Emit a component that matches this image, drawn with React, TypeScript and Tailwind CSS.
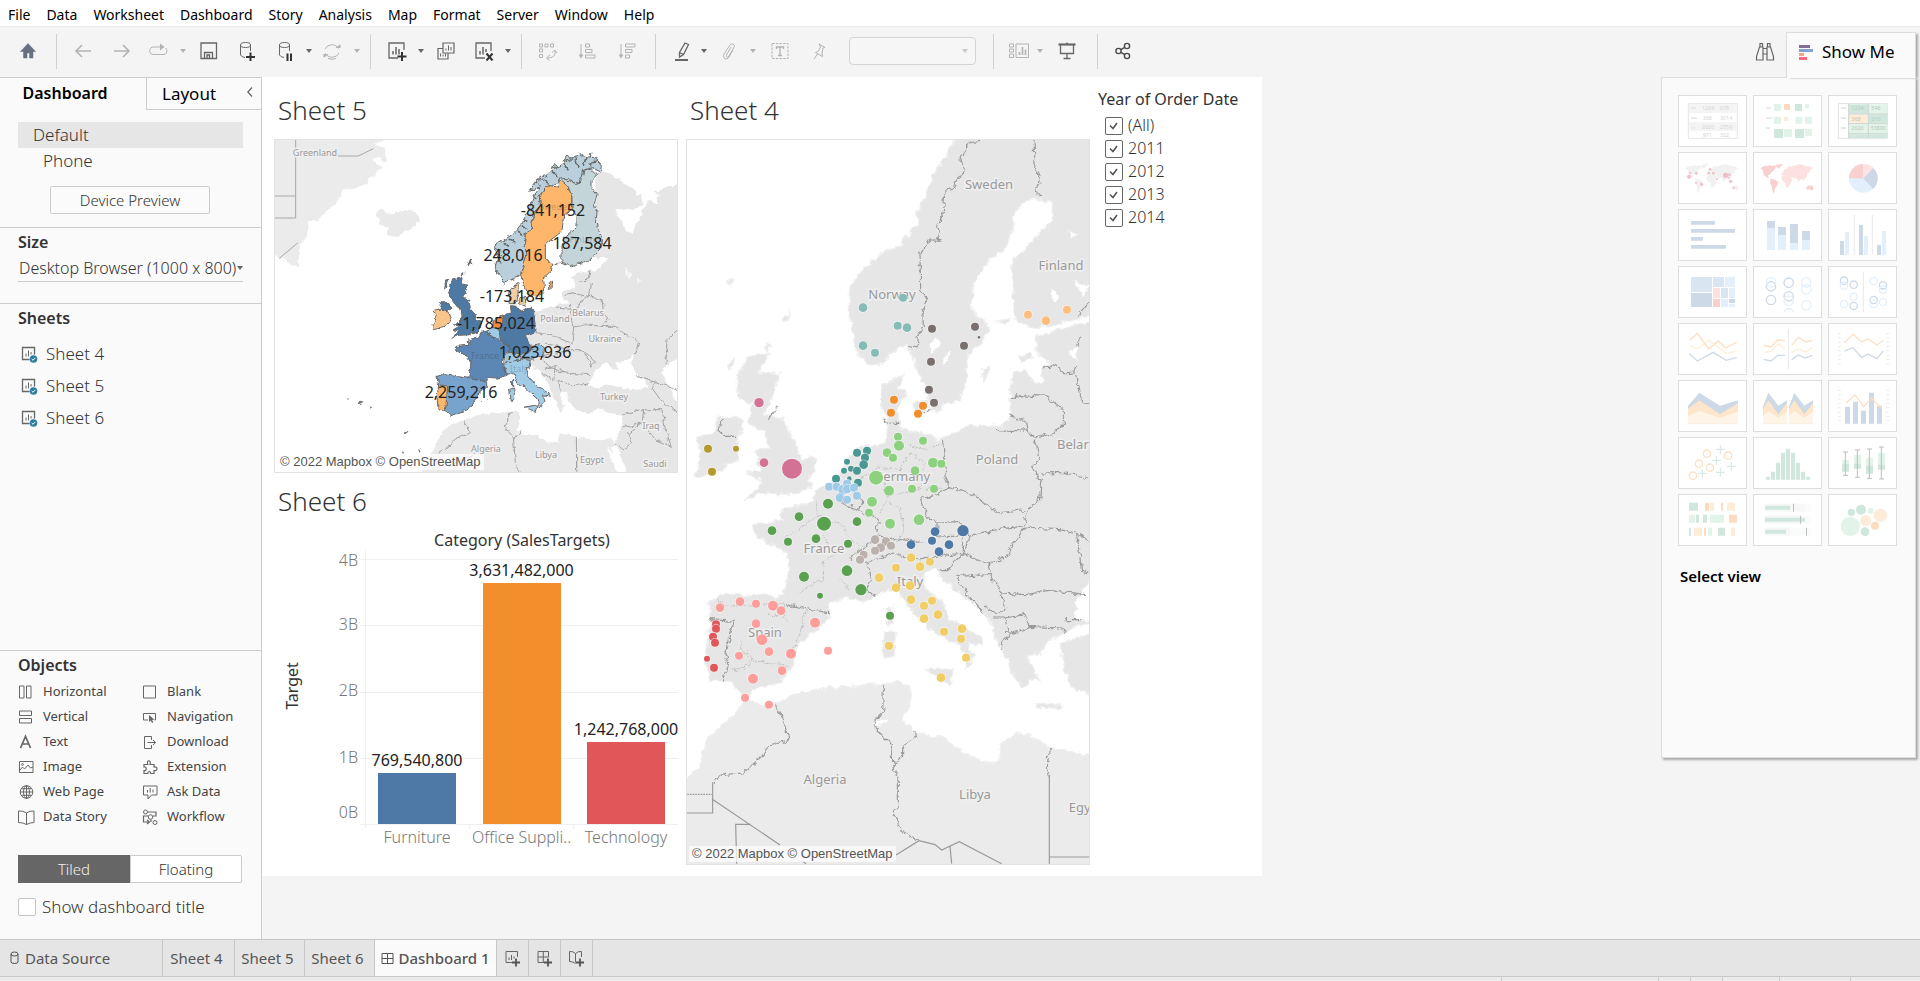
import React, { useState } from "react";

const ICON = "fill-none stroke-current";

function Svg({ w = 20, h = 20, className = "", children }: { w?: number; h?: number; className?: string; children: React.ReactNode }) {
  return (
    <svg width={w} height={h} viewBox={`0 0 ${w} ${h}`} className={`${ICON} shrink-0 ${className}`} aria-hidden="true">
      {children}
    </svg>
  );
}

function Caret({ className = "" }: { className?: string }) {
  return (
    <svg width="6" height="4" viewBox="0 0 6 4" className={`shrink-0 fill-current ${className}`} aria-hidden="true">
      <path d="M0 0h6L3 4z" />
    </svg>
  );
}

/* ---------------------------------------------------------------- menu */

const MENUS = ["File", "Data", "Worksheet", "Dashboard", "Story", "Analysis", "Map", "Format", "Server", "Window", "Help"];

function MenuBar() {
  return (
    <nav className="flex h-[26px] items-center gap-4 bg-white px-2 pt-1 text-[14px] leading-5 text-black">
      {MENUS.map((m) => (
        <button key={m} type="button">
          {m}
        </button>
      ))}
    </nav>
  );
}

/* ------------------------------------------------------------- toolbar */

function Tool({ label, className, dim, children }: { label: string; className: string; dim?: boolean; children: React.ReactNode }) {
  return (
    <button
      type="button"
      aria-label={label}
      className={`flex h-8 shrink-0 items-center justify-center ${dim ? "text-[#b3b3b3]" : "text-[#666666]"} ${className}`}
    >
      {children}
    </button>
  );
}

function Sep({ className = "" }: { className?: string }) {
  return <span className={`h-[35px] w-px shrink-0 bg-[#d0d0d0] ${className}`} />;
}

function Cylinder() {
  return (
    <>
      <ellipse cx="8.500" cy="4" rx="5" ry="2.500" />
      <path d="M3.500 4v10q1 2 4.500 2.500M13.500 4v6" />
    </>
  );
}

function Toolbar() {
  return (
    <header className="flex h-[51px] items-start border-t border-[#ececec] bg-[#f4f4f4]">
      <div className="flex h-12 items-center">
        <Tool label="Start page" className="w-14 !text-[#667080]">
          <Svg className="!fill-current">
            <path d="M10 2.500 2.500 10.500h3V17h3.500v-5h2.500v5H15v-6.500h2.500z" strokeWidth="0.500" />
          </Svg>
        </Tool>
        <Sep className="mr-1.5" />
        <Tool label="Undo" className="w-10" dim>
          <Svg>
            <path d="M18 10H3M9 4l-6 6 6 6" strokeWidth="1.600" />
          </Svg>
        </Tool>
        <Tool label="Redo" className="w-[38px]" dim>
          <Svg>
            <path d="M2 10h15M11 4l6 6-6 6" strokeWidth="1.600" />
          </Svg>
        </Tool>
        <Tool label="Replay" className="ml-0.5 w-8" dim>
          <Svg>
            <path d="M15 6H5a4 3.500 0 0 0 0 7.500h10q3-.5 3-3.500 0-2-1.500-3" />
            <path d="M11 2.500 15.500 6 11 9.500z" className="fill-current" stroke="none" />
          </Svg>
        </Tool>
        <Tool label="Replay options" className="w-4" dim><Caret /></Tool>
        <Tool label="Save" className="w-9">
          <Svg>
            <path d="M2 2h15.500v15.500H2zM5.500 17.500v-6h8v6M8 17.500V14h2.500v3.500" strokeWidth="1.300" />
          </Svg>
        </Tool>
        <Tool label="New data source" className="w-10">
          <Svg>
            <Cylinder />
            <path d="M9 16h9M13.500 11.500v9" stroke="#333" strokeWidth="2" />
          </Svg>
        </Tool>
        <Tool label="Pause auto updates" className="w-[38px]">
          <Svg>
            <Cylinder />
            <path d="M11.500 12.500V20M15 12.500V20" stroke="#333" strokeWidth="2" />
          </Svg>
        </Tool>
        <Tool label="Update options" className="w-2"><Caret /></Tool>
        <Tool label="Run update" className="w-[38px]" dim>
          <Svg>
            <path d="M3 8a7.500 7 0 0 1 13.500-.5M17 12a7.500 7 0 0 1-13.500.5M6 17.500q4 1.500 8 0" />
            <path d="M13.500 7h5V3zM6.500 13h-5v4z" className="fill-current" stroke="none" />
          </Svg>
        </Tool>
        <Tool label="Run options" className="w-3" dim><Caret /></Tool>
        <Sep className="mx-[7px]" />
        <Tool label="New worksheet" className="w-[38px]">
          <Svg>
            <path d="M17 9V2H2v15h9" strokeWidth="1.300" />
            <path d="M6 13.500V10M9 13.500V6M12 13.500V8" strokeWidth="1.500" />
            <path d="M10.500 15.500h9M15 11v9" stroke="#333" strokeWidth="2" />
          </Svg>
        </Tool>
        <Tool label="New worksheet options" className="w-2.5"><Caret /></Tool>
        <Tool label="Duplicate" className="w-10">
          <Svg>
            <path d="M7 2h11v10H7zM7 7.500H2V18h10v-6" strokeWidth="1.200" />
            <path d="M10 9.500v-2M12.500 9.500v-5M15 9.500V6M4.500 15.500v-3M7 15.500v-2M9.500 15.500v-3" />
          </Svg>
        </Tool>
        <Tool label="Clear sheet" className="w-9">
          <Svg>
            <path d="M17 10V2H2v15h9" strokeWidth="1.300" />
            <path d="M6 13.500V10M9 13.500V6M12 11V8" strokeWidth="1.500" />
            <path d="m12.500 12.500 6 7M18.500 12.500l-6 7" stroke="#333" strokeWidth="2" />
          </Svg>
        </Tool>
        <Tool label="Clear options" className="w-3"><Caret /></Tool>
        <Sep className="mx-[7px]" />
        <Tool label="Swap rows and columns" className="w-[38px]" dim>
          <Svg>
            <path d="M1.500 3h3v3h-3zM7 3h3v3H7zM12.500 3h3v3h-3zM1.500 8h3v3h-3zM1.500 13.500h3v3h-3z" />
            <path d="M17 10.500c.5 4-2 6.500-7.500 6.500M14 11.500l3-2.500 2 3M12 14l-3.500 3 3 2.500" />
          </Svg>
        </Tool>
        <Tool label="Sort ascending" className="w-10" dim>
          <Svg>
            <path d="M4 3v13M8.500 3h4v3h-4zM8.500 8.500h6.500v3H8.500zM8.500 14h9.500v3H8.500z" />
            <path d="M1.500 13.500h5L4 17.500z" className="fill-current" stroke="none" />
          </Svg>
        </Tool>
        <Tool label="Sort descending" className="w-10" dim>
          <Svg>
            <path d="M4 3v13M8.500 3H18v3H8.500zM8.500 8.500h6.500v3H8.500zM8.500 14h4v3h-4z" />
            <path d="M1.500 13.500h5L4 17.500z" className="fill-current" stroke="none" />
          </Svg>
        </Tool>
        <Sep className="mx-2" />
        <Tool label="Highlight" className="w-9">
          <Svg>
            <path d="m13 2 3.500 1.500-5 10-4 2.500v-4.500zM7.500 11.500l4 2" strokeWidth="1.300" />
            <path d="M3 19h13" strokeWidth="2" />
          </Svg>
        </Tool>
        <Tool label="Highlight options" className="w-2"><Caret /></Tool>
        <Tool label="Group members" className="w-[42px]" dim>
          <Svg>
            <path d="M12 6 7.500 14c-1 2 1.200 3 2.200 1.200L15 6.500c1.500-3-2-5-4-2.500L5 13c-2 4 2.500 7 5 3l4-7" />
          </Svg>
        </Tool>
        <Tool label="Group options" className="w-1.5" dim><Caret /></Tool>
        <Tool label="Show mark labels" className="ml-1 w-10" dim>
          <Svg>
            <path d="M2 2.500h16v15H2z" strokeDasharray="2.500 1.200" />
            <path d="M6.500 8V6h7v2M10 6v8.500M8 14.500h4" strokeWidth="1.300" />
          </Svg>
        </Tool>
        <Tool label="Fix axes" className="w-[38px]" dim>
          <Svg>
            <path d="m10 3 6 3.500-2 .5-1 5 .5 3.500-7-4 3-1.500 2-4zM8.500 13l-3.500 5" />
          </Svg>
        </Tool>
        <div className="ml-[11px] grid h-7 w-[127px] items-center">
          <select aria-label="Fit" className="col-start-1 row-start-1 h-7 w-full appearance-none rounded-sm border border-[#d4d4d4] bg-[#f6f6f6]">
            <option value="" />
          </select>
          <Caret className="pointer-events-none col-start-1 row-start-1 mr-2 justify-self-end text-[#c8c8c8]" />
        </div>
        <Sep className="mr-[7px] ml-[17px]" />
        <Tool label="Show cards" className="w-9" dim>
          <Svg>
            <path d="M.5 3h4v3h-4zM.5 8h4v3h-4zM.5 13h4v3.500h-4zM7 3h12.500v13.500H7z" />
            <path d="M10.500 14v-3M13.500 14V6M16.500 14V8.500" strokeWidth="1.600" />
          </Svg>
        </Tool>
        <Tool label="Card options" className="w-1.5" dim><Caret /></Tool>
        <Tool label="Presentation mode" className="ml-1 w-10">
          <Svg>
            <path d="M1.500 3.500h17" strokeWidth="2.200" />
            <path d="M3.500 4v8.500h13V4M10 1.500v2M10 12.500v5M6.500 17.500h7" strokeWidth="1.300" />
          </Svg>
        </Tool>
        <Sep className="mr-[7px] ml-2.5" />
        <Tool label="Share" className="w-9 !text-[#4a4a4a]">
          <Svg>
            <circle cx="5.500" cy="10" r="2.600" strokeWidth="1.400" />
            <circle cx="14" cy="5" r="2.600" strokeWidth="1.400" />
            <circle cx="14" cy="15" r="2.600" strokeWidth="1.400" />
            <path d="m7.800 8.700 4-2.400M7.800 11.300l4 2.400" strokeWidth="1.400" />
          </Svg>
        </Tool>
      </div>
      <div className="ml-auto flex items-start pr-1">
        <Tool label="Find" className="mt-2 w-[42px]">
          <Svg>
            <path d="M5 2.500h2.500V6H5zM12.500 2.500H15V6h-2.500zM4.500 6h3.500v13H1.500v-3.500zM15.500 6H12v13h6.500v-3.500zM8 7.500h4M8 13h4" strokeWidth="1.200" />
          </Svg>
        </Tool>
        <button
          type="button"
          className="relative z-10 mt-[5px] -mb-px flex h-[46px] w-[130px] items-center gap-2 border border-b-0 border-[#dcdcdc] bg-[#fafafa] pb-2 pl-3 text-[17px] leading-6 text-black shadow-[3px_1px_2px_-1px_#aaaaaa]"
        >
          <Svg w={15} h={16} className="!stroke-none">
            <path d="M0 1h11v3H0z" fill="#856f99" />
            <path d="M0 5h14v3H0z" fill="#82a3cf" />
            <path d="M0 9h5v3H0z" fill="#f2a680" />
            <path d="M0 13h8v3H0z" fill="#f76b80" />
          </Svg>
          Show Me
        </button>
      </div>
    </header>
  );
}

/* ------------------------------------------------------------- sidebar */

function SheetIcon() {
  return (
    <Svg w={17} h={17} className="text-[#666666]">
      <path d="M13.500 8.500V1.500h-12v12h7" strokeWidth="1.300" />
      <path d="M5 10.500v-3M7.500 10.500V4.500M10 8.500V6" />
      <circle cx="12.500" cy="13" r="3.800" fill="#2f7d9e" stroke="none" />
      <path d="m10.700 13 1.300 1.300 2.300-2.400" stroke="#fff" />
    </Svg>
  );
}

const OBJECTS: { name: string; icon: React.ReactNode }[] = [
  { name: "Horizontal", icon: <path d="M1.500 2h4.500v12H1.500zM8.500 2H13v12H8.500z" /> },
  { name: "Blank", icon: <path d="M1.500 2h12v12h-12z" /> },
  { name: "Vertical", icon: <path d="M1.500 2h12v4.500h-12zM1.500 9.500h12V14h-12z" /> },
  {
    name: "Navigation",
    icon: (
      <>
        <path d="M6 11H1.500V4.500h12V11h-1" />
        <path d="M7 6v7l1.800-1.500L10 14l1.300-.7-1.200-2.300 2.200-.4z" className="fill-current" stroke="none" />
      </>
    ),
  },
  { name: "Text", icon: <path d="m2.500 14 5-11.500 5 11.500M4.500 10h6" strokeWidth="1.700" /> },
  { name: "Download", icon: <path d="M9.500 6V2.500h-7v12h7V11M5.500 8.500h8M11 6l2.700 2.500L11 11" /> },
  {
    name: "Image",
    icon: (
      <>
        <path d="M1.500 2.500H15v11H1.500zM2 11l2.500-3 2 2 3.500-4 2.500 3L15 8" />
        <circle cx="4.500" cy="5.500" r=".9" />
      </>
    ),
  },
  {
    name: "Extension",
    icon: <path d="M2 8V5.500h3.800C4 .5 9.500.500 8 5.500h4V8c4-1 4 4.500 0 3.500V14.500H8.800c0-2.600-3-2.600-3 0H2V11.500c3 .8 3-4.200 0-3.500z" strokeWidth="1.200" />,
  },
  {
    name: "Web Page",
    icon: (
      <>
        <circle cx="8.500" cy="8" r="6.300" />
        <ellipse cx="8.500" cy="8" rx="3" ry="6.300" />
        <path d="M2.200 8h12.600M3.500 4.700h10M3.500 11.300h10M8.500 1.700v12.600" />
      </>
    ),
  },
  { name: "Ask Data", icon: <path d="M1.500 2H15v9H9.500L6 15v-4H1.500zM5.500 8.500V6M8.200 8.500V4M11 8.500V5.500" /> },
  { name: "Data Story", icon: <path d="M8.500 4q-3.500-2.500-8-2v11.500q4.500 0 8 2 3.500-2 7.500-2V2q-4-.5-7.500 2zM8.500 4v11.500" /> },
  {
    name: "Workflow",
    icon: (
      <>
        <circle cx="3.500" cy="3" r="2" />
        <circle cx="8.500" cy="8" r="2.300" />
        <circle cx="13" cy="13.500" r="2" />
        <path d="M5.500 3H14v4h-3M6 7H1.500v6H7M5 11l2.500 2L5 15M9 10.500V13" strokeWidth="1.200" />
      </>
    ),
  },
];

function Sidebar() {
  const [tiled, setTiled] = useState(true);
  return (
    <aside className="flex w-[262px] shrink-0 flex-col border-t border-r border-[#cccccc] bg-[#fafafa] text-[#333333]">
      <div className="flex text-[16px] leading-6 text-black">
        <button type="button" className="h-8 w-[146px] pr-4 pb-0.5 font-semibold">
          Dashboard
        </button>
        <button type="button" className="flex h-8 flex-1 items-center justify-between border-b border-l border-[#cccccc] pr-2 pl-[15px] text-[17px]">
          Layout
          <Svg w={6} h={10} className="mb-1 text-[#666666]">
            <path d="M5 .5.800 5 5 9.500" strokeWidth="1.300" />
          </Svg>
        </button>
      </div>
      <div className="px-[18px] pt-3 text-[17px] leading-[26px] font-light">
        <div className="bg-[#e6e6e6] pl-[15px]">Default</div>
        <div className="pl-[25px]">Phone</div>
        <button type="button" className="mt-3 mb-[13px] ml-8 block h-7 w-40 rounded-xs border border-[#cccccc] bg-[#fbfbfb] text-[15px] leading-6">
          Device Preview
        </button>
      </div>
      <section className="h-[76px] border-t border-[#cccccc] px-[18px] pt-0.5">
        <h2 className="text-[16px] leading-6 font-semibold">Size</h2>
        <button type="button" className="mt-0.5 flex h-[26px] w-full items-center justify-between border-b border-[#cccccc] pb-0.5 pl-px text-[16px] leading-6 font-light whitespace-nowrap">
          Desktop Browser (1000 x 800)
          <Caret className="text-[#666666]" />
        </button>
      </section>
      <section className="border-t border-[#cccccc] px-[18px] pt-0.5">
        <h2 className="text-[16px] leading-6 font-semibold">Sheets</h2>
        <ul className="mt-2 text-[17px] leading-8 font-light">
          {["Sheet 4", "Sheet 5", "Sheet 6"].map((s) => (
            <li key={s} className="flex items-center gap-2 pl-[3px]">
              <SheetIcon />
              {s}
            </li>
          ))}
        </ul>
      </section>
      <section className="mt-auto border-t border-[#cccccc] px-[18px] pt-0.5 pb-5">
        <h2 className="text-[16px] leading-6 font-semibold">Objects</h2>
        <ul className="mt-0.5 grid grid-cols-[124px_1fr] text-[13px] leading-[25px] text-[#444444]">
          {OBJECTS.map((o) => (
            <li key={o.name} className="flex items-center gap-2">
              <Svg w={17} h={16} className="text-[#666666]">{o.icon}</Svg>
              {o.name}
            </li>
          ))}
        </ul>
        <div className="mt-[26px] mr-px grid h-7 grid-cols-2 text-[15px] font-light">
          <button type="button" onClick={() => setTiled(true)} className={tiled ? "bg-[#666666] text-[#f0f0f0]" : "border border-[#cccccc] bg-white"}>
            Tiled
          </button>
          <button type="button" onClick={() => setTiled(false)} className={tiled ? "rounded-r-xs border border-[#cccccc] bg-white" : "bg-[#666666] text-[#f0f0f0]"}>
            Floating
          </button>
        </div>
        <label className="mt-3 flex items-center gap-1.5 text-[17px] leading-6 font-light">
          <input type="checkbox" className="size-[18px] appearance-none rounded-xs border border-[#c4c4c4] bg-white" />
          Show dashboard title
        </label>
      </section>
    </aside>
  );
}

/* ---------------------------------------------------------------- maps */

type Label = [number, number, string];

function MapLabels({ items, size }: { items: Label[]; size: string }) {
  return (
    <g className={`fill-[#999999] stroke-[#efefef] stroke-3 ${size}`} textAnchor="middle" paintOrder="stroke">
      {items.map(([x, y, t]) => (
        <text key={t} x={x} y={y}>
          {t}
        </text>
      ))}
    </g>
  );
}

function Coast({ id, scale }: { id: string; scale: number }) {
  return (
    <filter id={id} x="0" y="0" width="1300" height="2400" filterUnits="userSpaceOnUse">
      <feTurbulence type="fractalNoise" baseFrequency="0.050" numOctaves="4" seed="4" result="n" />
      <feDisplacementMap in="SourceGraphic" in2="n" scale={scale} xChannelSelector="R" yChannelSelector="G" />
    </filter>
  );
}

const TARGET_AREAS: [string, string][] = [
  ["#b9d0dc", "M705 585 700 560 708 530 697 500 735 475 760 458 775 440 800 390 815 350 832 325 800 332 850 288 880 265 930 235 960 228 1000 235 1018 255 1015 278 990 265 962 272 955 310 940 315 915 300 893 292 887 310 862 318 845 328 835 350 838 375 815 400 808 450 790 460 788 490 795 530 780 570 775 585 755 597 730 607Z"],
  ["#fdb66a", "M893 300 918 320 930 350 930 390 905 410 900 455 870 478 850 495 850 535 870 555 865 575 845 595 848 640 830 650 800 645 785 615 778 575 795 530 788 490 790 460 808 450 815 400 838 375 835 350 845 328 862 318 887 322Z"],
  ["#c3d5d9", "M893 292 915 300 940 315 955 310 962 272 985 265 1005 285 990 300 990 325 1005 345 997 375 1005 400 1000 430 1022 480 1010 512 980 545 935 560 900 548 900 500 905 475 945 440 945 410 930 390 930 350 918 320Z"],
  ["#4e79a3", "M572 600 600 594 598 612 617 616 612 640 598 652 620 662 627 690 640 705 640 722 656 726 656 742 648 757 625 765 592 767 568 775 592 755 574 750 600 735 578 738 600 715 598 690 584 680 572 660 560 640 566 620Z"],
  ["#4e79a3", "M535 685 540 670 560 668 570 685 558 696Z"],
  ["#fac58b", "M515 690 535 685 558 696 566 725 550 740 515 747 510 735 524 715Z"],
  ["#f58840", "M698 715 725 705 722 730 712 750 690 742Z"],
  ["#a0cbe6", "M670 755 690 745 712 752 716 784 700 775Z"],
  ["#4e79a3", "M745 678 765 680 775 695 805 685 815 700 822 755 790 768 808 800 800 820 740 822 737 797 716 784 712 752 722 730 725 705 748 700Z"],
  ["#f0cfa5", "M740 632 768 612 768 640 760 672 745 672Z"],
  ["#e9c796", "M770 655 790 650 792 680 772 672Z"],
  ["#5b87b5", "M658 757 670 755 700 775 740 796 738 815 720 840 725 865 732 888 705 895 680 893 668 908 620 898 627 850 615 830 585 812 582 800 620 797 620 780 650 772Z"],
  ["#a3c8dc", "M722 842 740 818 770 822 775 838 745 850Z"],
  ["#8dbde0", "M770 825 800 820 810 800 835 795 848 805 845 825 815 838 775 837Z"],
  ["#a0cbe6", "M725 850 745 848 775 838 805 842 801 862 790 868 800 890 825 920 862 940 862 950 845 945 848 965 835 985 828 960 790 925 765 905 755 880 730 885Z"],
  ["#a0cbe6", "M790 982 830 975 822 998 795 990ZM740 930 755 925 758 955 745 965Z"],
  ["#5b87b5", "M745 910 755 898 755 922Z"],
  ["#78a3cc", "M525 890 545 885 615 895 677 908 677 920 645 945 635 970 615 995 580 1003 567 1008 550 990 556 920 530 918Z"],
  ["#fdb66a", "M530 915 557 920 550 995 528 990 525 950Z"],
];

function SalesMap() {
  return (
    <svg viewBox="0 0 404 334" className="block w-full bg-white" role="img" aria-label="Sheet 5 map">
      <defs>
        <Coast id="coast-a" scale={16} />
      </defs>
      <g transform="scale(.33333) translate(-36 -178)">
        <g filter="url(#coast-a)">
          <path className="fill-[#ebebeb]" d="M20 150 370 160 362 188 335 195 372 205 372 248 345 232 330 240 362 264 340 285 320 298 300 320 240 330 237 352 215 380 195 395 165 422 142 425 138 450 130 470 115 490 108 560 90 555 60 535 20 515Z" />
          <path className="fill-[#e9e9e9]" d="M345 405 355 388 378 402 400 400 430 388 465 400 472 420 460 440 405 470 372 462 380 445 352 435Z" />
          <path
            className="fill-[#e6e6e6]"
            d="M1010 270 1045 282 1100 318 1138 352 1142 378 1110 392 1070 388 1058 405 1080 425 1095 455 1112 462 1120 435 1135 425 1140 395 1160 362 1185 370 1190 345 1175 335 1215 320 1260 315 1260 1190 1100 1190 1060 1090 1075 1050 1082 1005 1040 1000 1010 985 980 1003 940 990 918 965 915 935 900 935 892 945 905 975 895 1000 870 940 862 915 835 880 805 850 780 830 780 700 820 695 870 680 930 672 905 665 897 645 905 630 940 622 935 600 920 590 985 570 990 545 1010 510 1000 400 1000 300Z"
          />
          <path className="fill-[#e9e9e9]" d="M605 1020 640 1008 700 1000 745 995 775 997 772 1035 762 1050 785 1065 830 1070 850 1085 890 1088 892 1065 915 1060 945 1072 1000 1082 1030 1080 1045 1072 1062 1092 1050 1105 1075 1190 470 1190 520 1100 550 1045Z" />
          <path className="fill-white" d="M985 902 1000 870 1032 848 1050 865 1072 872 1062 852 1092 845 1118 822 1108 850 1115 875 1150 900 1160 925 1100 928 1040 915 1000 928 980 918ZM1260 830 1225 850 1203 862 1200 880 1225 930 1240 965 1260 965ZM920 575 985 560 990 535 1040 535 1000 575ZM1036 1098 1060 1130 1085 1190 1070 1190 1045 1135Z" />
          <path className="fill-[#f4f4f4]" d="M1085 560 1110 590 1100 600ZM1125 590 1140 605 1130 610Z" />
          <g className="fill-none stroke-[#a3a3a3]" strokeWidth="3">
            <path d="M985 570 975 605 950 608M985 610 980 650 930 640 905 645M980 650 950 670 940 690 880 685M925 672 935 740 930 790 915 785 870 768 820 758M980 650 1020 660 1025 700 1040 715 1020 740 970 735 935 742M1020 740 1060 740 1085 760 1130 785 1120 825M930 790 915 810 880 795 850 790M915 810 965 810 1000 850 990 860 965 812M840 830 880 825 915 812M850 870 880 855 905 880 985 885M880 855 875 905 840 880M885 905 930 915 985 910M885 905 895 935M845 840 860 860 905 880M1125 888 1180 905 1247 930M1180 905 1170 925 1195 960 1247 1000M1082 1005 1140 990 1200 990 1210 1050 1228 1100M1140 1030 1145 990M1082 1045 1140 1030 1100 1060 1110 1090 1080 1110 1062 1092M1140 1030 1180 1080 1228 1100M1212 850 1215 780 1247 750" />
            <path d="M605 1022 625 1060 580 1078 560 1100 530 1118M745 997 730 1040 755 1080 760 1150 775 1178M755 1080 778 1052M943 1072 944 1178M944 1178V1120M640 1120 560 1160" />
          </g>
          <path className="fill-[#777777]" d="M255 953l6 4-3 3zM285 965l12-2 10 5-14 6zM320 978l10 4-2 6zM425 1055l12-2 2 4-8 4zM418 1112l8 2-2 6zM465 1112l12-6-4 12z" />
          <g className="stroke-[#666666]" strokeWidth="3">
            {TARGET_AREAS.map(([fill, d], i) => (
              <path key={i} d={d} fill={fill} />
            ))}
            <path className="fill-[#b9d0dc]" d="M835 320l-35 15 20-25zM855 290l-30 12 22-20zM885 262l-22 4 20-12zM925 240l-22 6 15-20zM960 230l-8-8M985 232l2-10M700 505l18 10M700 525l22 6M705 545l14 2M712 590l-8-22" />
            <path className="fill-none" d="M740 478l20 10M725 488l16 12M765 458l18 10M780 438l12 10M785 420l12 6M810 350l16 8M840 300l20 14M870 275l16 16M905 250l14 22M940 236l8 26M975 232l-8 24M1000 240l-14 18" strokeWidth="5" />
            <path className="fill-[#4e79a3]" d="M625 540l-8 18 10-4zM605 575l-8 14 8-2zM552 600l-5 30 14-30z" />
            <path className="fill-[#e9a55b]" d="M862 612l10-6-2 20-8 4z" />
            <path className="fill-none" d="M875 555l14-2M890 548l22 8M655 965l4 4M672 955l6 4" />
          </g>
        </g>
        <g className="fill-none stroke-[#a8a8a8]" strokeWidth="3">
          <path d="M101 178V415H36M36 349h65M219 229h70l45-22M108 489 52 536" />
        </g>
      </g>
      <MapLabels
        size="text-[9px]"
        items={[
          [41, 17, "Greenland"], [281, 183, "Poland"], [314, 177, "Belarus"], [331, 203, "Ukraine"], [340, 261, "Turkey"],
          [377, 290, "Iraq"], [212, 313, "Algeria"], [272, 319, "Libya"], [318, 324, "Egypt"], [381, 328, "Saudi"],
        ]}
      />
      <g className="fill-black/20 text-[9px]" textAnchor="middle">
        <text x="211" y="220">France</text>
        <text x="245" y="233">Italy</text>
        <text x="282" y="71">Sweden</text>
        <text x="311" y="104">Finland</text>
      </g>
      <g className="fill-[#222222] text-[16px]" textAnchor="middle">
        <text x="279" y="77">-841,152</text>
        <text x="308" y="110">187,584</text>
        <text x="239" y="122">248,016</text>
        <text x="238" y="163">-173,184</text>
        <text x="222" y="190">-1,785,024</text>
        <text x="261" y="219">1,023,936</text>
        <text x="187" y="259">2,259,216</text>
      </g>
    </svg>
  );
}

/* x, y, radius */
const CITY_GROUPS: { fill: string; points: [number, number, number][] }[] = [
  { fill: "#86bcb6", points: [[669, 654, 12], [549, 684, 13], [653, 738, 12], [681, 744, 13], [549, 798, 13], [585, 819, 12]] },
  { fill: "#79706e", points: [[756, 747, 12], [885, 741, 12], [852, 798, 12], [753, 846, 12], [747, 930, 12], [762, 969, 12], [897, 773, 4]] },
  { fill: "#ffbe7d", points: [[1044, 705, 12], [1098, 723, 13], [1161, 690, 12]] },
  { fill: "#f28e2b", points: [[642, 960, 12], [633, 999, 12], [729, 978, 12], [714, 1002, 12]] },
  { fill: "#d37295", points: [[237, 969, 14], [252, 1149, 13], [336, 1167, 30]] },
  { fill: "#b6992d", points: [[84, 1107, 12], [168, 1107, 9], [96, 1176, 12]] },
  {
    fill: "#499894",
    points: [[531, 1119, 12], [561, 1113, 12], [555, 1134, 12], [551, 1155, 13], [501, 1146, 9], [513, 1167, 9], [492, 1173, 9], [531, 1173, 12], [468, 1197, 12], [508, 1197, 7], [534, 1209, 12]],
  },
  {
    fill: "#8cd17d",
    points: [[654, 1071, 12], [657, 1098, 15], [729, 1083, 12], [621, 1119, 13], [639, 1134, 12], [759, 1149, 15], [784, 1152, 12], [705, 1173, 13], [588, 1194, 21], [627, 1233, 15], [696, 1227, 12], [762, 1227, 12], [576, 1266, 15], [567, 1299, 12], [630, 1332, 15], [717, 1320, 16]],
  },
  { fill: "#a0cbe8", points: [[447, 1221, 12], [470, 1221, 12], [490, 1230, 15], [501, 1212, 12], [502, 1228, 13], [522, 1224, 12], [531, 1248, 12], [480, 1254, 13], [501, 1260, 12]] },
  {
    fill: "#59a14f",
    points: [[444, 1272, 15], [357, 1311, 13], [432, 1332, 21], [531, 1326, 13], [276, 1353, 13], [324, 1386, 12], [408, 1377, 13], [504, 1392, 12], [501, 1473, 16], [372, 1491, 15], [543, 1530, 17], [420, 1548, 9], [630, 1608, 12]],
  },
  { fill: "#bab0ac", points: [[585, 1380, 13], [618, 1386, 13], [633, 1398, 12], [602, 1404, 13], [585, 1413, 12], [551, 1425, 12], [540, 1440, 12]] },
  { fill: "#4e79a7", points: [[765, 1356, 13], [849, 1353, 17], [756, 1383, 12], [693, 1395, 13], [807, 1395, 13], [777, 1416, 13]] },
  {
    fill: "#f1ce63",
    points: [[693, 1434, 13], [648, 1464, 12], [720, 1461, 13], [750, 1446, 12], [597, 1494, 13], [690, 1518, 13], [648, 1524, 13], [693, 1560, 13], [756, 1563, 12], [732, 1578, 12], [774, 1605, 13], [732, 1617, 13], [792, 1656, 12], [846, 1647, 13], [843, 1677, 12], [858, 1734, 12], [783, 1794, 13], [627, 1698, 12]],
  },
  {
    fill: "#ff9d9a",
    points: [[120, 1584, 13], [180, 1566, 13], [228, 1572, 12], [279, 1578, 15], [303, 1593, 13], [228, 1632, 13], [405, 1629, 15], [246, 1680, 16], [267, 1716, 13], [333, 1722, 15], [444, 1713, 12], [177, 1728, 12], [306, 1773, 13], [219, 1797, 15], [195, 1854, 12], [267, 1875, 12]],
  },
  { fill: "#e15759", points: [[108, 1634, 12], [108, 1647, 12], [99, 1671, 12], [105, 1689, 12], [81, 1737, 9], [102, 1764, 12]] },
];

function CityMap() {
  return (
    <svg viewBox="0 0 404 726" className="block w-full bg-white" role="img" aria-label="Sheet 4 map">
      <defs>
        <Coast id="coast-b" scale={22} />
      </defs>
      <g transform="scale(.33333) translate(-18 -178)">
        <g filter="url(#coast-b)">
          <g className="fill-[#e6e6e6] stroke-[#f0f0f0]" strokeWidth="4">
            <path d="M830 150 800 230 760 285 735 350 710 400 715 430 685 462 660 500 600 520 540 580 510 620 505 680 515 740 525 800 545 840 590 858 620 840 650 805 680 795 695 820 710 870 735 920 748 990 775 1000 795 970 840 965 860 900 865 825 900 795 930 750 900 712 875 690 880 620 920 550 980 500 1000 455 998 410 1030 370 1060 355 1115 370 1118 420 1060 480 1015 530 995 540 998 620 1005 720 1060 745 1110 740 1245 705V150Z" />
            <path d="M1245 725 1190 735 1070 770 1065 810 1110 850 1085 868 1090 900 1070 915 1035 870 1000 880 990 930 990 1000 985 1020 960 1040 870 1035 780 1080 720 1060 690 1055 660 1040 652 990 680 935 655 925 670 882 605 920 605 990 625 1020 620 1070 610 1095 540 1100 500 1145 470 1200 405 1232 400 1270 300 1288 310 1320 215 1335 230 1370 320 1420 330 1450 312 1550 200 1545 125 1545 85 1570 90 1620 75 1740 90 1805 150 1805 195 1850 225 1825 290 1815 340 1760 350 1700 445 1620 450 1570 500 1553 550 1570 600 1540 650 1530 690 1590 740 1640 800 1680 845 1700 862 1770 882 1730 860 1690 912 1695 905 1670 860 1650 810 1620 790 1570 730 1520 735 1475 770 1465 790 1500 910 1600 940 1640 945 1680 985 1740 1000 1790 1030 1830 1050 1800 1080 1800 1040 1730 1080 1720 1110 1680 1140 1670 1190 1640 1245 1620Z" />
            <path d="M205 830 270 820 235 880 300 880 275 965 250 1005 310 1020 340 1080 365 1140 405 1132 405 1170 380 1210 400 1215 350 1245 240 1240 190 1265 250 1205 200 1180 240 1170 225 1110 270 1110 255 1060 205 1030 215 975 180 960 170 890Z" />
            <path d="M110 1010 180 1010 190 1050 170 1070 175 1140 90 1187 45 1190 62 1130 50 1070 100 1065Z" />
            <path d="M700 970 740 962 735 1000 705 1008ZM905 870 930 862 910 910ZM620 1590 638 1580 640 1625 625 1640ZM610 1655 645 1655 645 1730 612 1735ZM735 1770 820 1768 810 1820ZM1065 1870 1145 1878 1140 1886 1070 1884ZM1140 1690 1245 1660V1850L1170 1820 1150 1760ZM135 605l25-8-5 22zM310 715l18-20-6 36zM145 850l20-14-15 35zM1018 830l35-10 5 14-35 14zM945 725l45-8-15 20zM255 795l14 4-8 18z" />
          </g>
          <path className="fill-[#ebebeb] stroke-[#f0f0f0]" strokeWidth="4" d="M0 2110 60 2060 80 1980 160 1910 195 1857 270 1885 330 1850 420 1825 600 1815 655 1805 690 1820 690 1880 665 1920 710 1960 800 1975 830 2010 930 2055 960 2040 965 1990 1015 1960 1060 1970 1110 2005 1245 2030V2380H0Z" />
          <path className="fill-white" d="M1245 1480 1190 1560 1185 1620 1245 1625ZM745 790l30-15 5 25-25 20zM790 840l20-25-5 20-15 30zM1165 455l30 10-25 8zM1115 630l18 12-6 28-10-12zM1180 600l50 20-20 30zM1165 810l30-10-5 45zM590 1930l30-10 5 10-30 10z" />
          <g className="fill-none stroke-[#999999]" strokeWidth="3.500">
            <path d="M900 185 865 190 840 240 850 270 820 325 795 330 790 400 770 445 780 482 745 480 720 520 722 630 742 660 728 690 730 740 712 770 708 805 685 800M1062 180 1065 250 1080 290 1070 330 1082 355M1195 708 1228 668M1200 770 1190 800M1088 865 1120 855 1155 882 1185 880 1190 862M1190 885 1205 965 1228 970M990 960 1020 945 1100 950 1150 990 1150 1035 1125 1060 1065 1075M985 1005 1040 1025 1045 1055 945 1050M1045 1055 1065 1075 1078 1140 1055 1160 1085 1210 1078 1260 1045 1290 1030 1340M1085 1180 1150 1178 1228 1195M135 1018 112 1050 135 1070 165 1070M295 980 265 1020M608 1018 630 1030 655 1032" />
            <path d="M785 1080 790 1130 800 1200 810 1225 870 1240 910 1265 950 1300 1035 1290M810 1225 722 1260 740 1310 775 1330 770 1370 850 1365 850 1420 765 1430 700 1440 640 1420M775 1330 840 1325 870 1370 950 1350 1025 1340M870 1370 850 1420 925 1455 980 1430 1030 1345M1030 1345 1140 1350 1190 1360 1228 1385M1190 1360 1205 1475 1228 1480M850 1420 800 1470 770 1470M925 1455 935 1495 965 1540 1040 1545 1115 1530 1215 1545M830 1490 930 1485M830 1490 850 1530 910 1600M965 1540 975 1590 950 1600 915 1580M975 1615 1035 1605 1050 1640 1140 1645M985 1665 975 1615 940 1615M985 1665 1050 1645M1140 1645 1155 1650 1150 1670M985 1665 960 1710M1155 1620 1200 1620" />
            <path d="M500 1210 545 1260 540 1290 595 1320 590 1370 560 1400 510 1440M640 1420 560 1450 570 1490 560 1530 585 1550M540 1290 490 1275 475 1250M590 1370 660 1380 725 1385M315 1575 450 1600M90 1620 165 1625 150 1660 135 1720 145 1760 130 1805M735 1000 745 985" />
            <path d="M290 1880 310 1920 325 1985 270 1995 245 2030 190 2080 130 2085 98 2108M610 1815 608 1900 585 1920 590 1950 630 1990 640 2055 655 2110 655 2180 640 2190 660 2250 717 2283M640 2055 665 2030 665 2000 705 1975V1950M1108 2005 1102 2060 1108 2090" />
          </g>
          <g className="fill-none stroke-[#b5b5b5]" strokeWidth="2.500" strokeDasharray="6 3">
            <path d="M690 1100 740 1110 785 1090M540 1200 600 1160 660 1170 690 1120 730 1150 720 1230 620 1250 600 1180M720 1230 790 1225M660 1290 670 1360 640 1400M600 1300 620 1260 660 1290M410 1265 410 1310 370 1340 315 1370M410 1310 480 1330 520 1390 560 1400M430 1370 470 1420 440 1440M430 1440 430 1500 350 1540M480 1500 510 1530M110 1560 145 1580 310 1570 310 1620M180 1690 210 1740 190 1770 150 1770M210 1740 320 1760M380 1590 360 1660 340 1710M265 1600 320 1620" />
          </g>
        </g>
        <g className="fill-none stroke-[#999999]" strokeWidth="3.500">
          <path d="M98 2108V2200H18M96 2158 300 2296M170 2352 167 2234h45M370 2346l8 6M648 2326 717 2283 765 2295 785 2311 838 2286 965 2352M810 2300l5 52M1108 2085V2352M1108 2332h122" />
          <path d="M22 2144h74" strokeDasharray="5 3" />
        </g>
      </g>
      <MapLabels
        size="text-[13px]"
        items={[
          [303, 50, "Sweden"], [375, 131, "Finland"], [206, 160, "Norway"], [311, 325, "Poland"], [394, 310, "Belarus"],
          [216, 342, "Germany"], [138, 414, "France"], [79, 498, "Spain"], [224, 447, "Italy"], [139, 645, "Algeria"],
          [289, 660, "Libya"], [400, 673, "Egypt"],
        ]}
      />
      <g transform="scale(.33333) translate(-18 -178)" className="stroke-white/50" strokeWidth="5" paintOrder="stroke">
        {CITY_GROUPS.map((g) => (
          <g key={g.fill} fill={g.fill}>
            {g.points.map(([x, y, r]) => (
              <circle key={`${x}-${y}`} cx={x} cy={y} r={r} />
            ))}
          </g>
        ))}
      </g>
    </svg>
  );
}

function MapFrame({ children }: { children: React.ReactNode }) {
  return (
    <div className="relative overflow-hidden">
      {children}
      <p className="absolute bottom-[3px] left-[3px] bg-white/70 px-[3px] font-[Liberation_Sans,Arial,sans-serif] text-[13px] leading-4 text-[#555555]">
        © 2022 Mapbox © OpenStreetMap
      </p>
      <span className="pointer-events-none absolute inset-0 border border-[#e2e2e2]" />
    </div>
  );
}

/* --------------------------------------------------------------- chart */

const BARS = [
  { name: "Furniture", label: "769,540,800", value: 0.76954, fill: "#4e79a7" },
  { name: "Office Suppli..", label: "3,631,482,000", value: 3.631482, fill: "#f28e2b" },
  { name: "Technology", label: "1,242,768,000", value: 1.242768, fill: "#e15759" },
];

function TargetChart() {
  const base = 294;
  const unit = 66.25;
  return (
    <svg viewBox="0 0 404 338" className="block w-full text-[16px]" role="img" aria-label="Target by category">
      <g className="stroke-[#efefef]">
        {[0, 1, 2, 3, 4].map((n) => (
          <line key={n} x1="86" x2="404" y1={Math.round(base - n * unit) + 0.5} y2={Math.round(base - n * unit) + 0.5} />
        ))}
        <path d="M91.500 20V298M195.500 295v4M299.500 295v4" />
      </g>
      <g className="fill-[#777777] font-light" textAnchor="end">
        <text x="84" y="36">4B</text>
        <text x="84" y="100">3B</text>
        <text x="84" y="166">2B</text>
        <text x="84" y="233">1B</text>
        <text x="84" y="288">0B</text>
      </g>
      <text x="248" y="16" textAnchor="middle" className="fill-[#333333]">
        Category (SalesTargets)
      </text>
      <text x="24" y="156" textAnchor="middle" transform="rotate(-90 24 156)" className="fill-[#333333]">
        Target
      </text>
      {BARS.map((b, i) => {
        const x = 104 + i * 104.5;
        const h = Math.round(b.value * unit);
        return (
          <g key={b.name} textAnchor="middle">
            <rect x={Math.round(x)} y={base - h} width="78" height={h} fill={b.fill} />
            <text x={x + 39} y={base - h - 7} className="fill-[#222222]">
              {b.label}
            </text>
            <text x={x + 39} y="313" className="fill-[#777777] font-light">
              {b.name}
            </text>
          </g>
        );
      })}
    </svg>
  );
}

/* ----------------------------------------------------------- dashboard */

function YearFilter() {
  return (
    <fieldset className="pt-3 text-[#333333]">
      <legend className="float-left w-full text-[16px] leading-5 whitespace-nowrap">Year of Order Date</legend>
      <div className="clear-both pt-[5px] pl-[7px] text-[16px] leading-[23px] font-light">
        {["(All)", "2011", "2012", "2013", "2014"].map((y) => (
          <label key={y} className="flex items-center gap-[5px]">
            <span className="grid size-[18px]">
              <input type="checkbox" defaultChecked className="col-start-1 row-start-1 size-[18px] appearance-none rounded-xs border border-[#666666] bg-white" />
              <Svg w={18} h={18} className="pointer-events-none col-start-1 row-start-1 text-[#555555]">
                <path d="m5 8.500 3 3 4-5.500" strokeWidth="1.600" />
              </Svg>
            </span>
            {y}
          </label>
        ))}
      </div>
    </fieldset>
  );
}

function Dashboard() {
  const title = "pl-1 text-[26px] leading-8 font-light text-[#333333]";
  return (
    <div className="grid w-full max-w-[1000px] grid-cols-[1fr_1fr_164px] gap-x-2 self-start bg-white pb-2 pl-3">
      <div>
        <h1 className={`${title} pt-[17px] pb-[13px]`}>Sheet 5</h1>
        <MapFrame><SalesMap /></MapFrame>
        <h1 className={`${title} pt-3 pb-[13px]`}>Sheet 6</h1>
        <TargetChart />
      </div>
      <div>
        <h1 className={`${title} pt-[17px] pb-[13px]`}>Sheet 4</h1>
        <MapFrame><CityMap /></MapFrame>
      </div>
      <YearFilter />
    </div>
  );
}

/* ------------------------------------------------------------- show me */

const NAVY = "#cdd9e6";
const SKY = "#e3f0fb";
const MINT = "#cfe7dc";
const PALE = "#e2f3e9";
const PEACH = "#fbdcc0";
const CREAM = "#feebd8";

function R({ f, d }: { f: string; d: string }) {
  return <path d={d} fill={f} />;
}

function L({ s, d, w = 4 }: { s: string; d: string; w?: number }) {
  return <path d={d} stroke={s} strokeWidth={w} fill="none" />;
}

const AMERICAS = "M27 45l8-4 10 1 4-2 8 2 8-2 4 6-6 8-3 4-6 4-4 6-6 2 4 8-8-2-8-8-2-8-1-6-6-4zM52 82l6-2 10 5 8 6-4 10-6 8-2 8-2 8-4-8-2-14-5-10zM66 42l6-4 20-2-8 6-6 8-6-4z";
const AFRO_EURASIA = "M89 62l6-10 6-2 6-8 6 2 16-4 12-4 16 6 18 2 4 6-8 4-2 8-8 2 2 8-8 8-4 6-4-6-6 4-4 6-6-12-8 2-6-6-4 4-8-6-4 2-6-6-6 2-6-2zM87 72l10-4 14 2 8 14-4 4-4 10-6 10-6-4-2-12-8-4-4-8z";
const AUSTRALIA = "M160 106l8-6 6 2 4-3 4 12-6 5-6-4-9 2z";

const THUMBS: { name: string; art: React.ReactNode }[] = [
  {
    name: "text table",
    art: (
      <>
        <path d="M31 26h147v104H31z" fill="#fff" stroke="#e6e6e6" strokeWidth="3" />
        <R f="#f4f4f4" d="M33 28h143v26H33zM33 82h143v26H33z" />
        <R f="#e8e8e8" d="M39 37h15v5H39zM39 67h18v5H39zM39 97h12v5H39z" />
        <g className="fill-[#d4d4d4] text-[16px]">
          <text x="72" y="46">1234</text><text x="126" y="46">678</text>
          <text x="74" y="74">368</text><text x="126" y="74">3014</text>
          <text x="72" y="101">2620</text><text x="126" y="101">2559</text>
          <text x="74" y="126">971</text><text x="126" y="126">322</text>
        </g>
      </>
    ),
  },
  {
    name: "heat map",
    art: (
      <>
        <R f="#e8e8e8" d="M39 37h15v5H39zM39 67h18v5H39zM39 97h12v5H39z" />
        <R f={PALE} d="M63 27h21v21H63zM156 28h12v12h-12zM63 66h21v20H63zM127 66h20v20h-20zM156 66h21v20h-21zM93 102h24v24H93zM156 102h21v22h-21z" />
        <R f={MINT} d="M126 27h21v21h-21zM63 102h27v27H63zM126 102h27v27h-27z" />
        <R f={PEACH} d="M93 27h18v18H93z" /><R f={CREAM} d="M93 66h12v12H93z" />
      </>
    ),
  },
  {
    name: "highlight table",
    art: (
      <>
        <path d="M31 26h147v104H31z" fill="#fff" stroke="#e0e0e0" strokeWidth="3" />
        <R f={MINT} d="M63 28h57v28H63zM123 58h55v27h-55zM63 118h115v11H63z" />
        <R f={PALE} d="M123 28h55v28h-55zM63 88h115v27H63z" /><R f={CREAM} d="M63 58h57v27H63z" />
        <L s="#cbd5cf" w={3} d="M62 27v102M121 27v102M62 57h116M62 86h116M62 116h116" />
        <R f="#e4e4e4" d="M39 37h15v5H39zM39 67h15v5H39zM39 97h15v5H39z" />
        <g className="fill-[#b9c8bf] text-[16px]">
          <text x="70" y="46">1234</text><text x="130" y="46">546</text>
          <text x="70" y="77">368</text><text x="130" y="77">310</text>
          <text x="70" y="106">2620</text><text x="128" y="106">53890</text>
        </g>
      </>
    ),
  },
  {
    name: "symbol map",
    art: (
      <>
        <R f="#f1f1f1" d={`${AMERICAS}${AFRO_EURASIA}${AUSTRALIA}`} />
        <g fill="#f0bfc6">
          <circle cx="33" cy="74" r="6" /><circle cx="36" cy="63" r="3" /><circle cx="96" cy="52" r="4" /><circle cx="106" cy="64" r="4" /><circle cx="143" cy="70" r="8" /><circle cx="154" cy="68" r="4" /><circle cx="158" cy="88" r="5" /><circle cx="54" cy="92" r="3" /><circle cx="71" cy="97" r="5" /><circle cx="55" cy="64" r="4" /><circle cx="92" cy="63" r="4" /><circle cx="117" cy="81" r="3" /><circle cx="168" cy="107" r="3" /><circle cx="152" cy="77" r="3" />
        </g>
      </>
    ),
  },
  { name: "filled map", art: <><R f="#fde0e0" d={AFRO_EURASIA} /><R f="#f8d0cf" d={`${AMERICAS}${AUSTRALIA}`} /></> },
  {
    name: "pie chart",
    art: (
      <>
        <circle cx="106" cy="79" r="43" fill={SKY} />
        <R f="#f8d0cf" d="M106 79V36a43 43 0 0 0-43 43z" />
        <R f="#fee3e2" d="M106 79V36a43 43 0 0 1 30 12z" />
        <R f={NAVY} d="M106 79l30-31a43 43 0 0 1-1 63z" />
      </>
    ),
  },
  { name: "horizontal bars", art: <R f={NAVY} d="M39 36h72v11H39zM39 60h132v11H39zM39 84h36v11H39zM39 108h105v11H39z" /> },
  {
    name: "stacked bars",
    art: (
      <>
        <R f={SKY} d="M42 57h24v66H42zM75 78h24v45H75zM111 102h24v21h-24zM147 93h24v30h-24z" />
        <R f={NAVY} d="M42 36h24v21H42zM75 54h24v24H75zM111 45h24v57h-24zM147 66h24v27h-24z" />
      </>
    ),
  },
  {
    name: "side-by-side bars",
    art: (
      <>
        <L s="#e8e8e8" w={3} d="M79 18v120M133 18v120" />
        <R f={NAVY} d="M36 96h12v42H36zM93 48h12v90H93zM147 108h12v30h-12z" />
        <R f={SKY} d="M51 69h12v69H51zM108 81h12v57h-12zM162 66h12v72h-12z" />
      </>
    ),
  },
  {
    name: "treemap",
    art: (
      <>
        <R f="#d9e6f2" d="M39 33h63v45H39zM105 33h33v30h-33zM129 66h21v30h-21z" />
        <R f={NAVY} d="M39 81h63v42H39zM153 99h18v12h-18z" />
        <R f={SKY} d="M141 33h30v30h-30zM153 66h18v30h-18zM129 99h21v24h-21zM153 114h18v9h-18z" />
        <R f="#fee0df" d="M105 66h21v30h-21z" /><R f="#f8d0cf" d="M105 99h21v24h-21z" />
      </>
    ),
  },
  {
    name: "circle views",
    art: (
      <g fill="none" strokeWidth="4">
        <g stroke={NAVY}><circle cx="54" cy="61" r="14" /><circle cx="54" cy="102" r="14" /><circle cx="107" cy="50" r="14" /><circle cx="107" cy="91" r="14" /></g>
        <g stroke={SKY}><circle cx="54" cy="49" r="14" /><circle cx="160" cy="49" r="14" /><circle cx="160" cy="70" r="14" /><circle cx="160" cy="118" r="14" /><circle cx="107" cy="104" r="14" /><path d="M94 139a13 11 0 0 1 27 0" /></g>
      </g>
    ),
  },
  {
    name: "side-by-side circles",
    art: (
      <g fill="none" strokeWidth="4">
        <path d="M106 18v120" stroke="#e8e8e8" strokeWidth="3" />
        <g stroke={NAVY}><circle cx="48" cy="44" r="11" /><circle cx="77" cy="56" r="11" /><circle cx="77" cy="120" r="11" /><circle cx="137" cy="102" r="11" /><circle cx="165" cy="58" r="11" /></g>
        <g stroke={SKY}><circle cx="48" cy="59" r="11" /><circle cx="77" cy="92" r="11" /><circle cx="48" cy="114" r="11" /><circle cx="137" cy="45" r="11" /><circle cx="165" cy="71" r="11" /><circle cx="137" cy="114" r="11" /><circle cx="165" cy="108" r="11" /></g>
      </g>
    ),
  },
  {
    name: "lines continuous",
    art: (
      <>
        <L s="#fef0d8" d="M36 69l22 8 34-26 52 40 32-7" />
        <L s="#fde0c4" d="M36 51l22-20 34 47 29-24 22 21 33-17" />
        <L s={NAVY} d="M34 92l24 22 48-26 38 24 32-8" />
      </>
    ),
  },
  {
    name: "lines discrete",
    art: (
      <>
        <L s="#e8e8e8" w={3} d="M106 18v120" />
        <L s="#fef0d8" d="M32 88l22-3 20-23 21 14M114 88l24-9 22 8 18-14" />
        <L s="#fde0c4" d="M32 67l22 5 20-21 22 2M116 67l20-24 22 14 20-4" />
        <L s={NAVY} d="M32 109l22 5 20-17h22M116 110l20-14 20 9 22-8" />
      </>
    ),
  },
  {
    name: "dual lines",
    art: (
      <>
        <L s="#fde0c4" d="M49 59l26-25 26 23 18-10 28 19 19-14" />
        <L s={NAVY} d="M49 84l26-10 26 30 18-11 28 14 19-24" />
        <path d="M34 30v96M179 30v96" stroke="#ececec" strokeWidth="9" strokeDasharray="3 10" />
      </>
    ),
  },
  { name: "area charts continuous", art: <><R f={NAVY} d="M30 78l34-40 62 39 54-16v70H30z" /><R f="#fde6cb" d="M30 86l34-25 62 42 54-34v62H30z" /><R f="#fef4e8" d="M30 108l34-15 62 20 54-18v36H30z" /></> },
  {
    name: "area charts discrete",
    art: (
      <>
        {[30, 108].map((x) => (
          <g key={x} transform={`translate(${x})`}>
            <R f={NAVY} d="M0 80l16-42 30 39 26-16v70H0z" /><R f="#fde6cb" d="M0 88l16-27 30 42 26-34v62H0z" /><R f="#fef4e8" d="M0 108l16-15 30 20 26-18v36H0z" />
          </g>
        ))}
      </>
    ),
  },
  {
    name: "dual combination",
    art: (
      <>
        <R f={NAVY} d="M51 80h15v51H51zM75 65h15v66H75zM99 92h15v39H99zM123 38h15v93h-15zM147 77h15v54h-15z" />
        <L s="#fde0c4" d="M54 70l27-26 26 36 24-25 28 28" />
        <path d="M34 30v96M179 30v96" stroke="#ececec" strokeWidth="9" strokeDasharray="3 10" />
      </>
    ),
  },
  {
    name: "scatter plots",
    art: (
      <>
        <g fill="none" stroke="#fde0c4" strokeWidth="4"><circle cx="87" cy="50" r="11" /><circle cx="150" cy="56" r="11" /><circle cx="63" cy="80" r="11" /><circle cx="96" cy="92" r="11" /><circle cx="45" cy="116" r="11" /></g>
        <L s={MINT} w={3} d="M114 37h27M127 24v27M102 70h27M115 57v27M147 88h27M160 75v27M60 109h27M73 96v27M114 106h27M127 93v27" />
      </>
    ),
  },
  { name: "histogram", art: <R f={MINT} d="M39 119h12v9H39zM54 104h12v24H54zM69 77h12v51H69zM84 47h12v81H84zM99 35h12v93H99zM114 47h12v81h-12zM129 77h12v51h-12zM144 104h12v24h-12zM159 119h12v9h-12z" /> },
  {
    name: "box plots",
    art: (
      <>
        <R f={PALE} d="M42 68h21v12H42zM78 53h21v27H78zM114 62h21v24h-21zM150 47h21v36h-21z" />
        <R f={MINT} d="M42 80h21v24H42zM78 80h21v15H78zM114 86h21v24h-21zM150 83h21v15h-21z" />
        <L s="#bdbdbd" w={3} d="M52 45v70M45 45h15M45 115h15M88 39v82M81 39h15M81 121h15M124 36v88M117 36h15M117 124h15M160 30v96M153 30h15M153 126h15" />
      </>
    ),
  },
  {
    name: "gantt",
    art: (
      <>
        <R f={MINT} d="M33 26h27v24H33zM54 62h9v24h-9zM75 62h12v24H75zM33 101h6v24h-6zM120 101h21v24h-21z" />
        <R f={PALE} d="M33 62h18v24H33zM96 62h42v24H96zM90 101h12v24H90z" />
        <R f={PEACH} d="M81 26h12v24H81zM129 26h6v24h-6zM153 62h24v24h-24zM78 101h6v24h-6z" />
        <R f={CREAM} d="M96 26h12v24H96zM147 26h24v24h-24zM48 101h24v24H48zM159 101h12v24h-12z" />
      </>
    ),
  },
  {
    name: "bullet graphs",
    art: (
      <>
        <R f="#fafcfb" d="M36 29h138v24H36zM36 65h138v24H36zM36 101h138v24H36z" />
        <R f="#f7f7f7" d="M36 29h120v24H36zM36 65h105v24H36zM36 101h75v24H36z" />
        <R f={MINT} d="M36 35h75v12H36zM36 71h120v12H36zM36 107h63v12H36z" />
        <R f="#bdbdbd" d="M120 29h3v24h-3zM141 65h3v24h-3zM159 101h3v24h-3z" />
      </>
    ),
  },
  {
    name: "packed bubbles",
    art: (
      <>
        <circle cx="67" cy="97" r="29" fill={PALE} /><circle cx="70" cy="55" r="11" fill={MINT} /><circle cx="99" cy="47" r="15" fill={MINT} /><circle cx="128" cy="50" r="9" fill={PALE} /><circle cx="157" cy="64" r="20" fill={CREAM} /><circle cx="113" cy="80" r="17" fill={CREAM} /><circle cx="141" cy="95" r="12" fill={PEACH} /><circle cx="111" cy="113" r="13" fill={MINT} />
      </>
    ),
  },
];

function ShowMe() {
  return (
    <aside className="mr-1 ml-auto w-[255px] shrink-0 self-start border border-[#dcdcdc] bg-[#fafafa] px-4 pt-[17px] pb-[169px] shadow-[2px_2px_2px_0_#aaaaaa]">
      <div className="grid grid-cols-[69px_69px_69px] gap-x-1.5 gap-y-[5px]">
        {THUMBS.map((t) => (
          <button key={t.name} type="button" aria-label={t.name} className="h-[52px] border border-[#dedede] bg-white">
            <svg viewBox="3 3 201 150" className="block size-full" aria-hidden="true">
              {t.art}
            </svg>
          </button>
        ))}
      </div>
      <p className="mt-[18px] pl-0.5 text-[15px] leading-6 font-semibold text-black">Select view</p>
    </aside>
  );
}

/* -------------------------------------------------------------- bottom */

function PlusTab({ label, children }: { label: string; children: React.ReactNode }) {
  return (
    <button type="button" aria-label={label} className="flex w-8 items-center justify-center border-r border-[#c8c8c8] text-[#666666]">
      <Svg w={17} h={18} className="mb-px">
        {children}
        <path d="M8 13.500h8M12 9.500v8" stroke="#555" strokeWidth="1.800" />
      </Svg>
    </button>
  );
}

function BottomTabs() {
  return (
    <footer>
      <div className="flex h-[38px] border-y border-[#c8c8c8] bg-[#e5e5e5] text-[15px] leading-6 text-[#555555]">
        <button type="button" className="flex w-[163px] items-center gap-1.5 border-r border-[#c8c8c8] pl-2.5">
          <Svg w={9} h={14}>
            <ellipse cx="4.500" cy="3" rx="3.500" ry="2" />
            <path d="M1 3v8q0 1.500 3.500 1.500T8 11V3" />
          </Svg>
          Data Source
        </button>
        <button type="button" className="w-[72px] border-r border-[#c8c8c8] pr-1">Sheet 4</button>
        <button type="button" className="w-[70px] border-r border-[#c8c8c8] pr-1">Sheet 5</button>
        <button type="button" className="w-[70px] border-r border-[#c8c8c8] pr-1">Sheet 6</button>
        <button type="button" className="flex w-[122px] items-center justify-center gap-1 border-r border-[#c8c8c8] bg-[#fafafa] font-medium">
          <Svg w={13} h={13}>
            <path d="M1 1.500h11v10H1zM1 6.500h11M6.500 1.500v10" />
          </Svg>
          Dashboard 1
        </button>
        <PlusTab label="New worksheet"><path d="M13.500 8V2.500H2v11h6M5 11V8.500M7.500 11V6M10 9.500V7.500" /></PlusTab>
        <PlusTab label="New dashboard"><path d="M12.500 8V2.500H2v11h6M2 8h10.500M7.300 2.500v11" /></PlusTab>
        <PlusTab label="New story"><path d="M7.500 4.500Q5 2 1.500 2.500v10q3.500 0 6 2M7.500 4.500Q10 2 13.500 2.500V8M7.500 4.500v9" /></PlusTab>
      </div>
      <div className="flex h-1 justify-end bg-[#ebebeb]">
        <span className="w-[157px] border-l border-[#c8c8c8]" />
        <span className="w-8 border-l border-[#c8c8c8]" />
        <span className="w-8 border-l border-[#c8c8c8]" />
        <span className="w-[57px] border-l border-[#c8c8c8]" />
        <span className="w-[71px] border-l border-[#c8c8c8]" />
        <span className="w-[70px] border-l border-[#c8c8c8]" />
      </div>
    </footer>
  );
}

export default function App() {
  return (
    <div className="flex min-h-screen flex-col bg-[#f4f4f4] font-[Noto_Sans,Open_Sans,sans-serif]">
      <MenuBar />
      <Toolbar />
      <main className="flex flex-1">
        <Sidebar />
        <Dashboard />
        <ShowMe />
      </main>
      <BottomTabs />
    </div>
  );
}
